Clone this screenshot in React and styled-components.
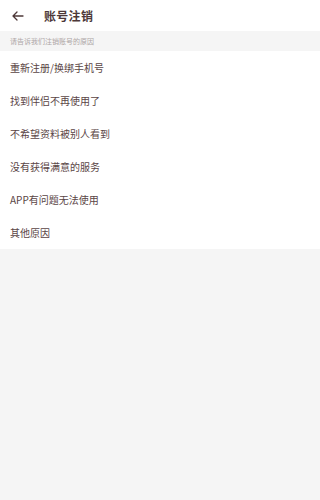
import styled, { createGlobalStyle } from "styled-components";

const GlobalStyle = createGlobalStyle`
  html, body {
    margin: 0;
    padding: 0;
    background: #f5f5f5;
    font-family: "Noto Sans CJK SC", "Noto Sans", sans-serif;
  }
`;

const Page = styled.div`
  width: 100%;
  min-height: 500px;
  background: #f5f5f5;
`;

const Header = styled.header`
  height: 31px;
  display: flex;
  align-items: center;
  background: #fff;
  padding: 0 0 0 11px;
  box-sizing: border-box;
`;

const Back = styled.button`
  border: 0;
  background: none;
  padding: 0;
  width: 14px;
  height: 14px;
  display: flex;
  align-items: center;
  justify-content: center;
  color: #4d3838;
`;

const Title = styled.h1`
  margin: 0 0 0 19px;
  font-size: 12px;
  font-weight: 700;
  color: #4d3838;
  letter-spacing: 0.3px;
`;

const Hint = styled.div`
  height: 20px;
  display: flex;
  align-items: center;
  padding-left: 10px;
  font-size: 7px;
  color: #aea6a6;
  background: #f5f5f5;
`;

const List = styled.ul`
  list-style: none;
  margin: 0;
  padding: 0;
  background: #fff;
`;

const Item = styled.li`
  height: 33px;
  display: flex;
  align-items: center;
  padding-left: 10px;
  font-size: 10px;
  color: #5a4545;
`;

const reasons = [
  "重新注册/换绑手机号",
  "找到伴侣不再使用了",
  "不希望资料被别人看到",
  "没有获得满意的服务",
  "APP有问题无法使用",
  "其他原因",
];

export default function App() {
  return (
    <Page>
      <GlobalStyle />
      <Header>
        <Back aria-label="返回">
          <svg width="12" height="10" viewBox="0 0 12 10" fill="none">
            <path
              d="M11 5H1.5M5 1L1 5l4 4"
              stroke="currentColor"
              strokeWidth="1.3"
              strokeLinecap="round"
              strokeLinejoin="round"
            />
          </svg>
        </Back>
        <Title>账号注销</Title>
      </Header>
      <Hint>请告诉我们注销账号的原因</Hint>
      <List>
        {reasons.map((r) => (
          <Item key={r}>{r}</Item>
        ))}
      </List>
    </Page>
  );
}
